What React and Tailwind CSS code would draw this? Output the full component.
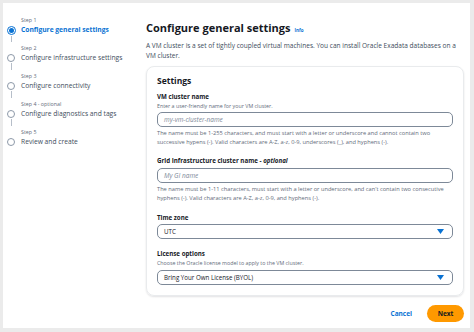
const STEPS = [
  { label: 'Step 1', title: 'Configure general settings', active: true },
  { label: 'Step 2', title: 'Configure infrastructure settings' },
  { label: 'Step 3', title: 'Configure connectivity' },
  { label: 'Step 4 - optional', title: 'Configure diagnostics and tags' },
  { label: 'Step 5', title: 'Review and create' },
];

function Caret() {
  return (
    <svg width="7" height="5" viewBox="0 0 7 5" className="shrink-0">
      <path d="M0 0h7L3.5 5z" fill="#0972d3" />
    </svg>
  );
}

export default function App() {
  return (
    <div className="w-[474px] h-[332px] bg-[#ebebeb] pt-[3px] pl-[3px] overflow-hidden" style={{ fontFamily: '"Open Sans", "Noto Sans", sans-serif' }}>
      <div className="w-[467px] h-[325px] bg-white flex text-[#16191f]">
        {/* Side navigation */}
        <nav className="w-[140px] shrink-0 pl-[3px] pt-[12px]">
          {STEPS.map((s, i) => (
            <div key={s.title} className="flex gap-[5px]">
              <div className="w-[10px] flex flex-col items-center">
                <div className="h-[10px]" />
                {s.active ? (
                  <div className="w-[9px] h-[9px] rounded-full border-[1.5px] border-[#0972d3] flex items-center justify-center mt-[0.5px]">
                    <div className="w-[5px] h-[5px] rounded-full bg-[#0972d3]" />
                  </div>
                ) : (
                  <div className="w-[8px] h-[8px] rounded-full border border-[#8d99a8] mt-[1px]" />
                )}
                {i < STEPS.length - 1 && <div className="w-px flex-1 bg-[#b6bec9] my-[1px]" />}
              </div>
              <div className="pb-[7.5px]">
                <div className="text-[5.3px] leading-[10px] text-[#5f6b7a]">{s.label}</div>
                <div className={`text-[6.7px] leading-[10.5px] whitespace-nowrap ${s.active ? 'text-[#0972d3] font-bold' : 'text-[#414d5c]'}`}>
                  {s.title}
                </div>
              </div>
            </div>
          ))}
        </nav>

        {/* Main content */}
        <main className="flex-1 pl-[3px] pr-[6px] pt-[17px]">
          <h1 className="text-[11px] leading-[16px] font-bold flex items-baseline gap-[4px]">
            Configure general settings
            <span className="text-[4.5px] font-bold text-[#0972d3]">Info</span>
          </h1>
          <p className="text-[6.55px] leading-[10px] text-[#414d5c] mt-[3px] pr-[2px]">
            A VM cluster is a set of tightly coupled virtual machines. You can install Oracle Exadata databases on a VM cluster.
          </p>

          <section className="mt-[5px] border border-[#e9ebed] rounded-[8px] shadow-[0_1px_2px_rgba(0,7,22,0.12)] px-[10px] pt-[7px] pb-[10px]">
            <h2 className="text-[8.5px] leading-[14px] font-bold">Settings</h2>

            <div className="mt-[4px]">
              <div className="text-[6.2px] leading-[10px] font-bold">VM cluster name</div>
              <div className="text-[5.3px] leading-[8px] text-[#5f6b7a]">Enter a user-friendly name for your VM cluster.</div>
              <div className="mt-[2px] h-[15px] rounded-[5px] border border-[#7d8998] px-[6px] flex items-center text-[6.5px] italic text-[#7d8998]">
                my-vm-cluster-name
              </div>
              <div className="text-[5.7px] leading-[9px] text-[#5f6b7a] mt-[2px]">
                The name must be 1-255 characters, and must start with a letter or underscore and cannot contain two successive hypens (-). Valid characters are A-Z, a-z, 0-9, underscores (_), and hyphens (-).
              </div>
            </div>

            <div className="mt-[9px]">
              <div className="text-[6.2px] leading-[10px] font-bold">
                Grid Infrastructure cluster name - <i>optional</i>
              </div>
              <div className="mt-[2px] h-[15px] rounded-[5px] border border-[#7d8998] px-[6px] flex items-center text-[6.5px] italic text-[#7d8998]">
                My GI name
              </div>
              <div className="text-[5.7px] leading-[9px] text-[#5f6b7a] mt-[2px]">
                The name must be 1-11 characters, must start with a letter or underscore, and can't contain two consecutive hyphens (-). Valid characters are A-Z, a-z, 0-9, and hyphens (-).
              </div>
            </div>

            <div className="mt-[10px]">
              <div className="text-[6.2px] leading-[10px] font-bold">Time zone</div>
              <div className="mt-[1px] h-[15px] rounded-[5px] border border-[#7d8998] pl-[6px] pr-[8px] flex items-center justify-between text-[6.2px]">
                UTC
                <Caret />
              </div>
            </div>

            <div className="mt-[10px]">
              <div className="text-[6.2px] leading-[10px] font-bold">License options</div>
              <div className="text-[5.3px] leading-[8px] text-[#5f6b7a]">Choose the Oracle license model to apply to the VM cluster.</div>
              <div className="mt-[3px] h-[15px] rounded-[5px] border border-[#7d8998] pl-[6px] pr-[8px] flex items-center justify-between text-[6.2px]">
                Bring Your Own License (BYOL)
                <Caret />
              </div>
            </div>
          </section>

          <div className="flex justify-end items-center gap-[15px] mt-[9px]">
            <span className="text-[6.5px] font-bold text-[#0972d3]">Cancel</span>
            <button className="h-[17px] w-[37px] rounded-full bg-[#ff9900] text-[6.5px] font-bold text-[#16191f]">Next</button>
          </div>
        </main>
      </div>
    </div>
  );
}
